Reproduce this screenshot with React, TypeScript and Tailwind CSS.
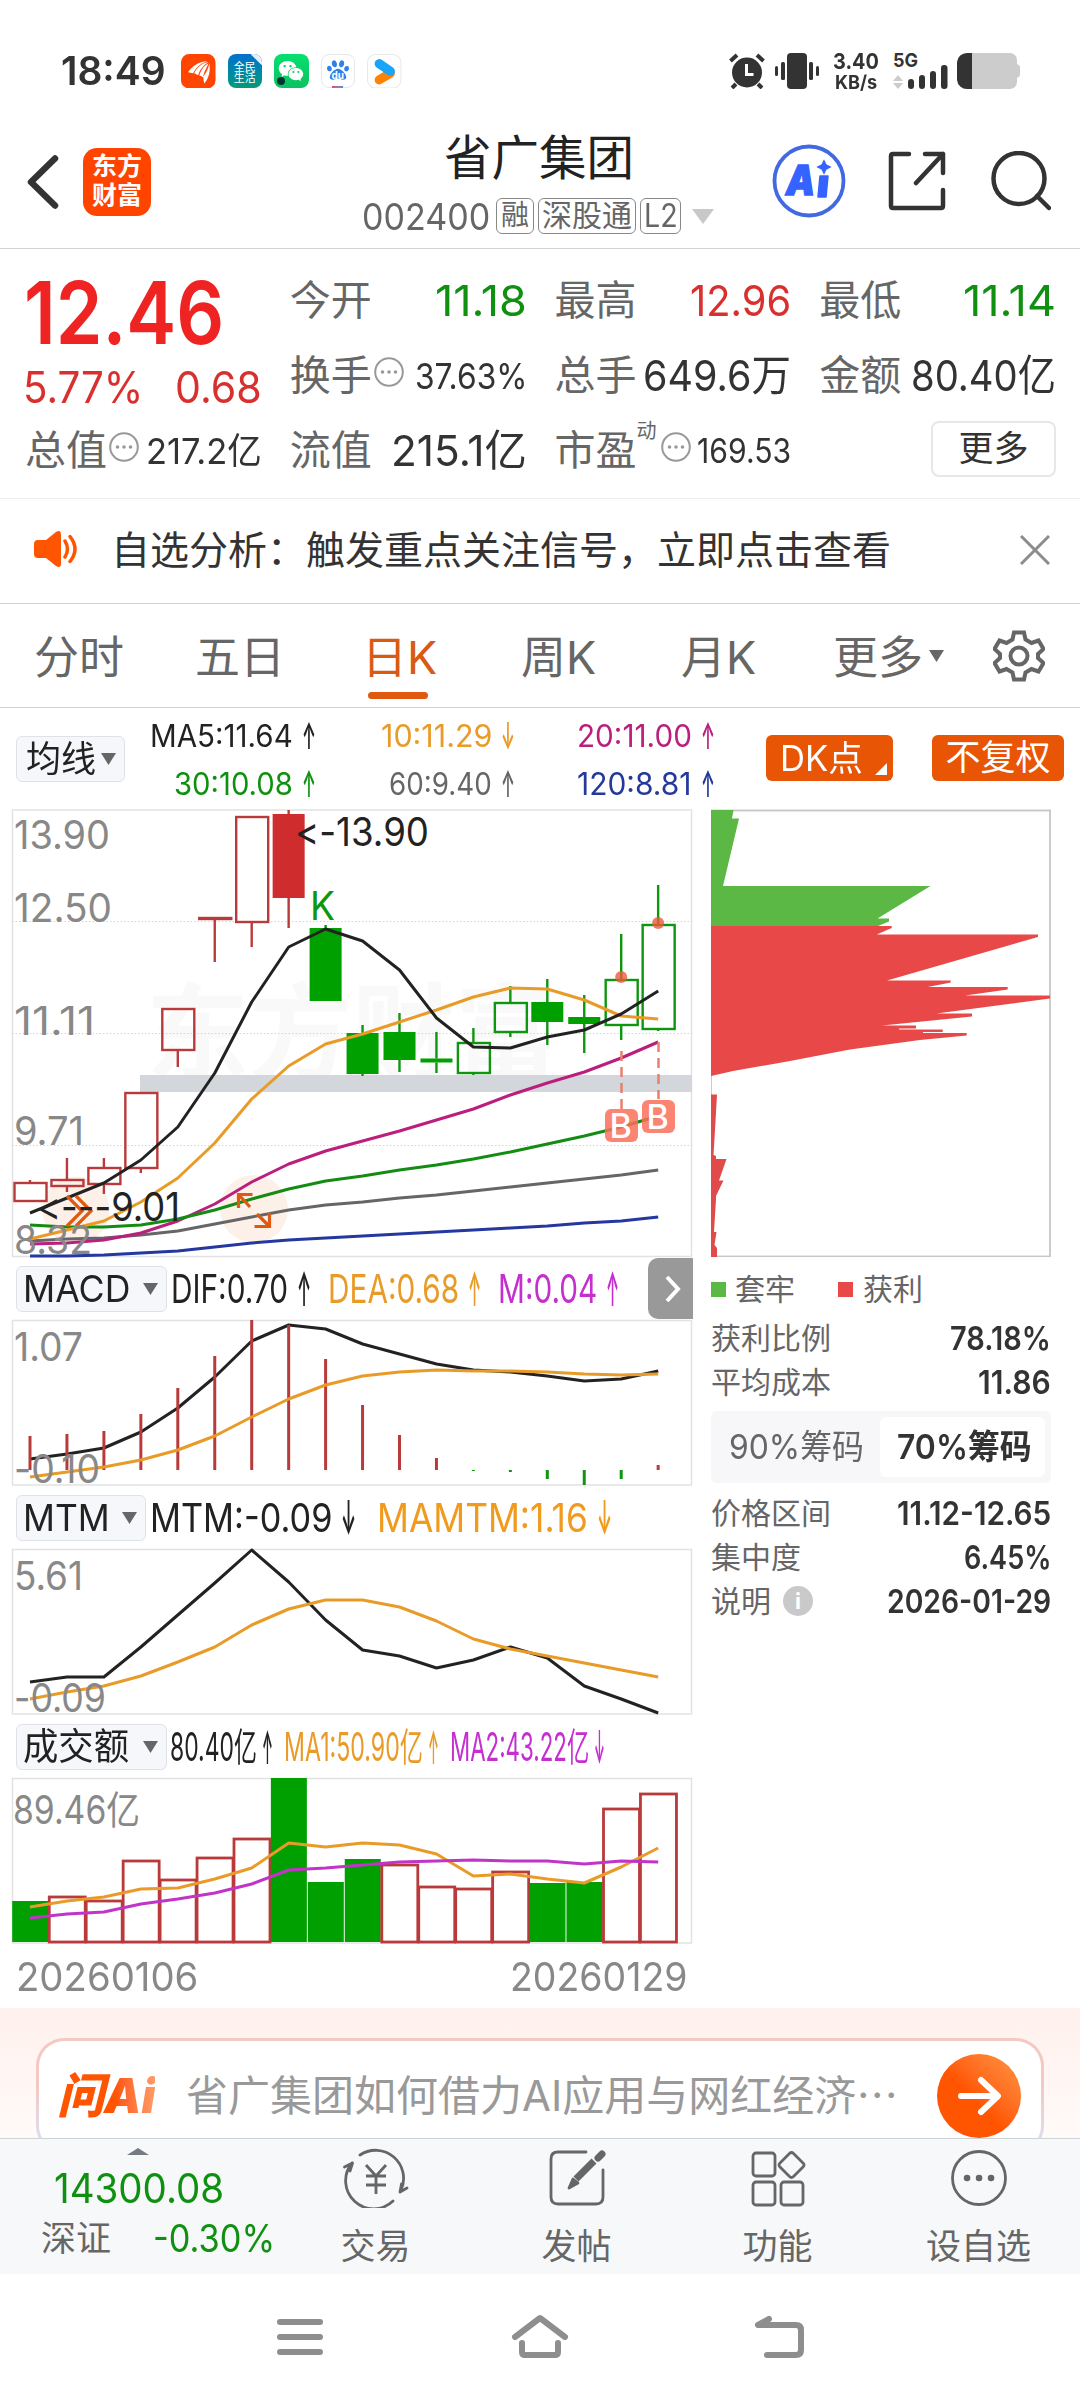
import { useLayoutEffect, useRef, type ReactNode } from "react";
import { AiFillWechat } from "react-icons/ai";
import { FaPaw } from "react-icons/fa";

// Squeezes or stretches one line of text to the width of its cell
function Fit({ w, className = "", children }: { w: number; className?: string; children: ReactNode }) {
  const ref = useRef<HTMLSpanElement>(null);

  useLayoutEffect(() => {
    const el = ref.current;
    if (el) el.style.transform = `scaleX(${w / el.offsetWidth})`;
  }, [w, children]);

  return (
    <span className={`block shrink-0 whitespace-nowrap leading-none ${className}`} style={{ width: w }}>
      <span ref={ref} className="inline-block origin-left">
        {children}
      </span>
    </span>
  );
}

function Down({ className = "" }: { className?: string }) {
  return (
    <svg viewBox="0 0 15 12" preserveAspectRatio="none" className={`shrink-0 ${className}`} fill="currentColor">
      <path d="M0 0h15L7.5 12z" />
    </svg>
  );
}

function Dots() {
  return (
    <svg viewBox="0 0 30 30" className="w-[30px] h-[30px] shrink-0 text-[#999]">
      <circle cx="15" cy="15" r="13.8" fill="none" stroke="currentColor" strokeWidth="2" />
      <circle cx="8.5" cy="15" r="1.8" fill="currentColor" />
      <circle cx="15" cy="15" r="1.8" fill="currentColor" />
      <circle cx="21.5" cy="15" r="1.8" fill="currentColor" />
    </svg>
  );
}

function StatusBar() {
  return (
    <div className="h-[124px] pt-[53px] pl-[61px] pr-[60px] flex items-start justify-between text-[#333]">
      <div className="flex items-center h-9">
        <Fit w={105} className="text-[40px] font-semibold">18:49</Fit>
        <div className="flex gap-3 ml-[15px]">
          <svg viewBox="0 0 34 34" className="w-[34.5px] h-[34.5px]">
            <rect width="34" height="34" rx="8" fill="#ff4500" />
            <path d="M7 18C11 12 17 8 26 7c-8 3-12 8-14 12zM13 19c3-6 8-10 14-11-6 4-9 9-10 13zM18 21c2-6 5-10 9-12-2 6-5 9-5 14z" fill="#fff" />
            <path d="M28 9c1 7 0 14-5 20-1-3-1-5-1-7 3-4 5-8 6-13z" fill="#fff" />
          </svg>
          <div className="w-[34.5px] h-[34.5px] rounded-lg bg-gradient-to-b from-[#0c6ed0] to-[#079a76] text-white text-[11px] leading-[11px] text-center pt-[8px] overflow-hidden relative">
            <div>全民</div>
            <div>生活</div>
            <div className="absolute -top-[7px] -right-[7px] w-[15px] h-[15px] rotate-45 bg-[#e8eef5]" />
          </div>
          <div className="w-[34.5px] h-[34.5px] rounded-lg bg-gradient-to-b from-[#05e070] to-[#0bc160] flex items-center justify-center relative">
            <AiFillWechat className="w-7 h-7 text-white" />
            <div className="absolute left-[3px] bottom-[3px] w-[8px] h-[8px] rounded-full bg-[#033]" />
          </div>
          <div className="w-[34.5px] h-[34.5px] rounded-lg border border-gray-200 relative flex justify-center">
            <FaPaw className="w-[22px] h-[26px] text-[#2f80e8] mt-[2px]" />
            <span className="absolute top-[15px] text-[10px] font-bold text-white leading-none">du</span>
            <div className="absolute -bottom-px w-[11px] h-[2px] bg-gradient-to-r from-[#e6455a] to-[#3b8be8]" />
          </div>
          <svg viewBox="0 0 34 34" className="w-[34.5px] h-[34.5px]">
            <rect x=".5" y=".5" width="33" height="33" rx="8" fill="#fff" stroke="#e8e8e8" />
            <path d="M12 25.5L23 19" stroke="#ff8208" strokeWidth="9" strokeLinecap="round" />
            <path d="M12 9.5L23 17" stroke="#18a4f8" strokeWidth="9" strokeLinecap="round" />
          </svg>
        </div>
      </div>

      <div className="flex items-start h-9">
        <svg viewBox="0 0 36 36" className="w-9 h-9">
          <circle cx="18" cy="19.5" r="15" fill="#333" />
          <path d="M1.5 8L8 2M34.5 8L28 2M7 31l-4 4M29 31l4 4" stroke="#333" strokeWidth="4" />
          <path d="M17.500 11v10.500h7" fill="none" stroke="#fff" strokeWidth="3" />
        </svg>
        <svg viewBox="0 0 44 36" className="w-11 h-9 ml-[10px]" fill="#333">
          <rect x="12" width="20" height="36" rx="4" />
          <rect x="6" y="9" width="4" height="18" rx="1.500" />
          <rect x="34" y="9" width="4" height="18" rx="1.500" />
          <rect y="13" width="3" height="10" rx="1.500" />
          <rect x="41" y="13" width="3" height="10" rx="1.500" />
        </svg>
        <div className="ml-[14px]">
          <Fit w={46} className="text-[22px] font-bold -mt-[3px]">3.40</Fit>
          <Fit w={42} className="text-[19px] font-bold mt-[1px] ml-[2px]">KB/s</Fit>
        </div>
        <svg viewBox="0 0 56 36" className="w-14 h-9 ml-[14px] overflow-visible" fill="#333">
          <text x="0" y="14" textLength="25" lengthAdjust="spacingAndGlyphs" className="text-[19px] font-bold">5G</text>
          <path d="M0 28l5-6 5 6zM0 30h10l-5 6z" fill="#ccc" />
          <rect x="15" y="26" width="6" height="10" rx="3" />
          <rect x="26" y="22" width="6" height="14" rx="3" />
          <rect x="37" y="18" width="6" height="18" rx="3" />
          <rect x="48" y="12" width="6.500" height="24" rx="3" />
        </svg>
        <svg viewBox="0 0 63 36" className="w-[63px] h-9 ml-[8px]">
          <path d="M15 0h38a7 7 0 0 1 7 7v4q3 1 3 3v8q0 2-3 3v4a7 7 0 0 1-7 7H15z" fill="#ccc" />
          <path d="M15 0v36H10A10 10 0 0 1 0 27V9A10 10 0 0 1 10 0z" fill="#333" />
        </svg>
      </div>
    </div>
  );
}

function Header() {
  return (
    <div className="h-[125px] border-b border-[#d3d3d3] flex text-[#333]">
      <svg viewBox="0 0 32 54" className="w-8 h-[54px] ml-[27px] mt-[31px]">
        <path d="M28 3.500L4 27l24 23.500" fill="none" stroke="#333" strokeWidth="6.500" strokeLinecap="round" strokeLinejoin="round" />
      </svg>
      <div className="w-[68px] h-[68px] ml-6 mt-6 rounded-[14px] bg-[#ff4400] text-white text-[25px] leading-[29px] font-bold text-center pt-[4px]">
        <div>东方</div>
        <div>财富</div>
      </div>

      <div className="w-[352px] ml-[211px] pt-[10px]">
        <div className="text-[47.5px] leading-[48px] text-[#222] pl-[82px] whitespace-nowrap">省广集团</div>
        <div className="flex items-center mt-[15px] h-[38px] text-[#666]">
          <Fit w={128} className="text-[37px]">002400</Fit>
          <div className="w-[38px] h-9 ml-[6px] rounded-md border border-[#888] text-[28px] leading-[33px] text-center">融</div>
          <div className="w-[98px] h-9 ml-1 rounded-md border border-[#888] text-[30px] leading-[33px] text-center">深股通</div>
          <div className="w-[41px] h-9 ml-1 rounded-md border border-[#888] flex items-center justify-center">
            <Fit w={34} className="text-[32px]">L2</Fit>
          </div>
          <Down className="w-[22px] h-[15px] ml-[11px] text-[#c8c8c8]" />
        </div>
      </div>

      <svg viewBox="0 0 74 74" className="w-[74px] h-[74px] ml-[58px] mt-5">
        <circle cx="37" cy="37" r="34.500" fill="none" stroke="#4169e1" strokeWidth="3.800" />
        <text x="14" y="51" textLength="29" lengthAdjust="spacingAndGlyphs" fill="#3563ff" stroke="#3563ff" strokeWidth="1.500" className="text-[41px] font-black italic">A</text>
        <path d="M48 32h8l-2 21h-8z" fill="#3563ff" stroke="#3563ff" strokeWidth="1.500" strokeLinejoin="round" />
        <path d="M52 17l2 4 4 2-4 2-2 4-2-4-4-2 4-2z" fill="#3563ff" stroke="#3563ff" strokeWidth="1.500" />
      </svg>
      <svg viewBox="0 0 58 60" className="w-[58px] h-[60px] ml-[42px] mt-[27px]" fill="none" stroke="#333" strokeWidth="4.500" strokeLinecap="round" strokeLinejoin="round">
        <path d="M21 3H5Q3 3 3 5v50q0 2 2 2h48q2 0 2-2V39" />
        <path d="M37 3h18v19M55 3L28 32" />
      </svg>
      <svg viewBox="0 0 60 60" className="w-[60px] h-[60px] ml-[45px] mt-[27px]" fill="none" stroke="#333" strokeWidth="4.500" strokeLinecap="round">
        <circle cx="28" cy="27.500" r="25.500" />
        <path d="M46 45l12 12" />
      </svg>
    </div>
  );
}

type CellProps = { label: string; value: string; w: number; tone?: string; size?: string; dots?: boolean; sup?: string };

function Cell({ label, value, w, tone = "text-[#333]", size = "text-[43px]", dots, sup }: CellProps) {
  return (
    <div className="h-[75px] flex items-center justify-between">
      <div className="flex items-center">
        <span className="text-[41px] leading-none text-[#666] whitespace-nowrap">{label}</span>
        {sup && <span className="text-[20px] leading-none text-[#666] mb-10 mr-[2px]">{sup}</span>}
        {dots && <div className="mb-2 ml-[2px]"><Dots /></div>}
      </div>
      <Fit w={w} className={`${size} ${tone}`}>{value}</Fit>
    </div>
  );
}

function Quote() {
  const red = "text-[#d8302f]";
  const green = "text-[#109010]";
  const small = "text-[36px]";
  return (
    <div className="h-[250px] border-b border-[#ececec] pl-[25px] pr-[24px] pt-[14px] grid grid-cols-4 gap-x-7 content-start">
      <div className="row-span-2 pt-[6px]">
        <Fit w={200} className="text-[87px] font-semibold text-[#f02323] -ml-[1px]">12.46</Fit>
        <div className={`flex justify-between mt-[9px] ${red}`}>
          <Fit w={120} className="text-[44px] -ml-[2px]">5.77%</Fit>
          <Fit w={87} className="text-[44px]">0.68</Fit>
        </div>
      </div>
      <Cell label="今开" value="11.18" w={92} tone={green} />
      <Cell label="最高" value="12.96" w={101} tone={red} />
      <Cell label="最低" value="11.14" w={93} tone={green} />
      <Cell label="换手" value="37.63%" w={112} size={small} dots />
      <Cell label="总手" value="649.6万" w={148} />
      <Cell label="金额" value="80.40亿" w={145} />
      <Cell label="总值" value="217.2亿" w={116} size={small} dots />
      <Cell label="流值" value="215.1亿" w={136} />
      <Cell label="市盈" value="169.53" w={94} size="text-[34px]" sup="动" dots />
      <div className="h-[75px] flex items-center justify-end">
        <div className="w-[125px] h-[56px] -mt-1 rounded-lg border-2 border-[#e6e7e8] text-[35px] leading-[50px] text-[#333] text-center">更多</div>
      </div>
    </div>
  );
}

function Notice() {
  return (
    <div className="h-[105px] border-b border-[#d3d3d3] flex items-center">
      <svg viewBox="0 0 44 36" className="w-11 h-9 ml-[34px] mb-1">
        <path d="M0 13q0-4 4-4h8L22 1q5-3 5 3v28q0 6-5 3l-10-8H4q-4 0-4-4z" fill="#ff5500" />
        <path d="M31 10q5 8 0 16M36 5.500q10 12.500 0 25" fill="none" stroke="#ff5500" strokeWidth="3.500" strokeLinecap="round" />
      </svg>
      <span className="ml-[33px] mb-[3px] text-[39px] leading-none text-[#333] whitespace-nowrap">自选分析：触发重点关注信号，立即点击查看</span>
      <svg viewBox="0 0 30 30" className="w-[30px] h-[30px] ml-auto mr-[30px] mb-[2px]" stroke="#8c8c8c" strokeWidth="3">
        <path d="M1 1l28 28M29 1L1 29" />
      </svg>
    </div>
  );
}

function Tabs() {
  const tab = "text-[45px] leading-none whitespace-nowrap mt-[4px]";
  return (
    <div className="h-[104px] border-b border-[#d3d3d3] flex items-center text-[#666] relative">
      <span className={`${tab} ml-[34px] w-[161px]`}>分时</span>
      <span className={`${tab} w-[167px]`}>五日</span>
      <span className={`${tab} w-[159px] text-[#d95a13]`}>日K</span>
      <span className={`${tab} w-[160px]`}>周K</span>
      <span className={`${tab} w-[152px]`}>月K</span>
      <span className={tab}>更多</span>
      <Down className="w-[15px] h-3 ml-[6px]" />
      <svg viewBox="0 0 52 52" className="w-[52px] h-[52px] ml-[49px]" fill="none" stroke="#666" strokeWidth="4">
        <path d="M21 2.500h10l1.500 7 6 3.500 7-2.500 5 8.500-5.500 5v4l5.500 5-5 8.500-7-2.500-6 3.500-1.500 7H21l-1.500-7-6-3.500-7 2.500-5-8.500L7 28v-4l-5.500-5 5-8.500 7 2.500 6-3.500z" />
        <circle cx="26" cy="26" r="8.500" />
      </svg>
      <div className="absolute left-[368px] bottom-2 w-[60px] h-[7px] rounded-full bg-[#df5a10]" />
    </div>
  );
}

function Arrow({ up = true, w = 14 }: { up?: boolean; w?: number }) {
  return <Fit w={w} className="ml-[9px] text-[1.2em] font-semibold">{up ? "↑" : "↓"}</Fit>;
}

function Ma({ text, w, up = true, tone }: { text: string; w: number; up?: boolean; tone: string }) {
  return (
    <div className={`flex items-center justify-end text-[31px] h-[48.5px] ${tone}`}>
      <Fit w={w}>{text}</Fit>
      <Arrow up={up} />
    </div>
  );
}

function MaBar() {
  return (
    <div className="h-[101px] flex items-start pl-4">
      <div className="w-[109px] h-[46px] mt-[28px] rounded-md border border-[#dfe2e6] bg-[#f6f7fa] flex items-center pl-[9px] text-[#222]">
        <Fit w={70} className="text-[36px]">均线</Fit>
        <Down className="w-[15px] h-3 ml-[5px] text-[#666]" />
      </div>
      <div className="mt-[3px] w-[191px]">
        <Ma text="MA5:11.64" w={143} tone="text-[#222]" />
        <Ma text="30:10.08" w={119} tone="text-[#109010]" />
      </div>
      <div className="mt-[3px] w-[199px]">
        <Ma text="10:11.29" w={111} up={false} tone="text-[#e99b28]" />
        <Ma text="60:9.40" w={103} tone="text-[#666]" />
      </div>
      <div className="mt-[3px] w-[200px]">
        <Ma text="20:11.00" w={115} tone="text-[#bb1f7d]" />
        <Ma text="120:8.81" w={115} tone="text-[#24399b]" />
      </div>
      <div className="w-[127px] h-[46px] ml-[51px] mt-[27px] rounded-md bg-[#e85504] text-white flex items-center pl-[14px] relative">
        <Fit w={83} className="text-[35px]">DK点</Fit>
        <svg viewBox="0 0 12 12" className="absolute right-[6px] bottom-[6px] w-3 h-3">
          <path d="M12 0v12H0z" fill="#fff" />
        </svg>
      </div>
      <div className="w-[132px] h-[46px] ml-[39px] mt-[27px] rounded-md bg-[#e85504] text-white text-[35px] leading-[44px] text-center">不复权</div>
    </div>
  );
}

const x = (i: number) => 30 + 36.95 * i;
const line = (ys: number[]) => ys.map((y, i) => `${x(i).toFixed(1)},${y}`).join(" ");

const RED = "#b93a3a";
const GREEN = "#0f960f";

// kind: r hollow red, R filled red, g hollow green, G filled green; then body top, body bottom, high, low
const candles: [string, number, number, number, number][] = [
  ["r", 1183, 1201, 1180, 1201],
  ["r", 1180, 1186, 1158, 1192],
  ["r", 1168, 1184, 1158, 1194],
  ["r", 1093, 1168, 1093, 1173],
  ["r", 1009, 1050, 1009, 1067],
  ["r", 918, 919, 918, 962],
  ["r", 817, 922, 817, 947],
  ["R", 814, 898, 810, 928],
  ["G", 928, 1001, 925, 1001],
  ["G", 1033, 1074, 1025, 1076],
  ["G", 1032, 1060, 1013, 1072],
  ["G", 1058.5, 1062.5, 1032, 1073],
  ["g", 1043, 1073, 1028, 1075],
  ["g", 1003, 1032, 986, 1037],
  ["G", 1002, 1022, 979, 1045],
  ["G", 1017, 1024, 995, 1053],
  ["g", 980, 1025, 934, 1040],
  ["g", 925, 1029, 885, 1031],
];

const ma5 = [1213, 1198, 1183, 1160, 1127, 1073, 1002, 947, 929, 941, 970, 1018, 1047, 1048, 1037, 1030, 1014, 991];
const ma10 = [1239, 1230, 1221, 1202, 1178, 1143, 1099, 1066, 1044, 1034, 1022, 1010, 997, 988, 989, 1000, 1016, 1019];
const ma20 = [1244, 1243, 1240, 1233, 1221, 1204, 1182, 1164, 1151, 1141, 1131, 1120, 1109, 1095, 1083, 1072, 1058, 1042];
const ma30 = [1225, 1227, 1227, 1225, 1219, 1210, 1199, 1189, 1181, 1176, 1170, 1165, 1159, 1152, 1144, 1136, 1127, 1116];
const ma60 = [1241, 1239, 1238, 1235, 1231, 1224, 1217, 1210, 1205, 1202, 1198, 1195, 1191, 1187, 1183, 1179, 1175, 1170];
const ma120 = [1256, 1256, 1255, 1253, 1251, 1247, 1243, 1240, 1238, 1236, 1234, 1232, 1230, 1228, 1226, 1223, 1221, 1217];

function Line({ ys, color }: { ys: number[]; color: string }) {
  return <polyline points={line(ys)} fill="none" stroke={color} strokeWidth="3" strokeLinejoin="round" />;
}

function Label({ y, w, children, lx = 14, fill = "#888" }: { y: number; w: number; children: string; lx?: number; fill?: string }) {
  return (
    <text x={lx} y={y} textLength={w} lengthAdjust="spacingAndGlyphs" fill={fill} className="text-[39px] [font-feature-settings:'calt'_0]">
      {children}
    </text>
  );
}

function KChart() {
  return (
    <svg viewBox="12 809 681 448" className="w-[681px] h-[448px] block overflow-visible">
      <text x="146" y="1072" textLength="412" lengthAdjust="spacingAndGlyphs" fill="#f9f9f9" className="text-[106px] font-bold">东方财富</text>
      <rect x="12.5" y="810" width="679" height="446.5" fill="none" stroke="#e2e2e2" strokeWidth="1.5" />
      <path d="M12 921.500H692M12 1033.500H692M12 1145.500H692" stroke="#d4d4d4" strokeDasharray="1.500 2" />
      <rect x="140" y="1075" width="552" height="17" fill="#d3d7dc" />

      <circle cx="76" cy="1210" r="33.5" fill="#fdf0e9" />
      <circle cx="254" cy="1209" r="34" fill="#fdf0e9" />

      {candles.map(([kind, top, bottom, high, low], i) => {
        const solid = kind === "R" || kind === "G";
        const fill = kind === "R" ? "#cf2d2d" : kind === "G" ? "#00a000" : "#fff";
        const stroke = kind === "r" || kind === "R" ? RED : GREEN;
        return (
          <g key={i} stroke={stroke} strokeWidth="2.4">
            <path d={`M${x(i)} ${high}V${top}M${x(i)} ${bottom}V${low}`} />
            {solid ? (
              <rect x={x(i) - 16} y={top} width="32" height={bottom - top} fill={fill} stroke="none" />
            ) : (
              <rect x={x(i) - 15.5} y={top} width="32" height={bottom - top} fill={i > 15 ? "#fff" : "none"} />
            )}
          </g>
        );
      })}

      <Line ys={ma120} color="#2438a0" />
      <Line ys={ma60} color="#666" />
      <Line ys={ma20} color="#bb1f7d" />
      <Line ys={ma30} color="#148c14" />
      <Line ys={ma10} color="#e99b28" />
      <Line ys={ma5} color="#222" />

      <g fill="none" stroke="#df5a10" strokeWidth="3.2">
        <path d="M67 1196l15 15-15 15M76 1196l15 15-15 15" />
        <path d="M250 1207l-11-12M238.500 1208v-13.500h14M257 1214l12 12M269.500 1213v13.500h-15" />
      </g>

      <path d="M621.500 1051v58M658.500 1042v57" stroke="#e6806f" strokeWidth="2.500" strokeDasharray="10 6" />
      <circle cx={x(16)} cy="977" r="6" fill="#ee5a3c" opacity=".8" />
      <circle cx={x(17)} cy="923" r="6" fill="#ee5a3c" opacity=".8" />
      <g fill="#fa6e5a" fillOpacity=".85">
        <rect x="605" y="1109" width="33" height="33" rx="6" />
        <rect x="642" y="1100" width="33" height="33" rx="6" />
      </g>
      <g fill="#fff" className="text-[34px] font-medium">
        <text x="609.500" y="1138">B</text>
        <text x="646.500" y="1129">B</text>
      </g>

      <Label y={849} w={96}>13.90</Label>
      <Label y={922} w={98}>12.50</Label>
      <Label y={1035} w={81}>11.11</Label>
      <Label y={1145} w={70}>9.71</Label>
      <Label y={1254} w={78}>8.32</Label>
      <Label y={846} w={134} lx={295} fill="#222">{"<-13.90"}</Label>
      <Label y={1221} w={143} lx={37} fill="#222">{"<---9.01"}</Label>
      <Label y={920} w={25} lx={310} fill={GREEN}>K</Label>
    </svg>
  );
}

function Pick({ label, w, box }: { label: string; w: number; box: string }) {
  return (
    <div className={`${box} h-[46px] ml-1 shrink-0 rounded-md border border-[#dfe2e6] bg-[#f6f7fa] flex items-center justify-between pl-[6px] pr-[8px] text-[#222]`}>
      <Fit w={w} className="text-[37px]">{label}</Fit>
      <Down className="w-[15px] h-3 text-[#666]" />
    </div>
  );
}

const macd = [1436, 1434, 1431, 1414, 1388, 1356, 1320, 1325, 1359, 1405, 1435, 1458, 1471, 1472, 1479, 1485, 1479, 1465];
const dif = [1459, 1454, 1448, 1432, 1408, 1377, 1341, 1325, 1329, 1344, 1354, 1364, 1370, 1372, 1376, 1381, 1379, 1371];
const dea = [1477, 1472, 1467, 1460, 1450, 1436, 1417, 1399, 1385, 1376, 1372, 1370, 1371, 1371, 1372, 1374, 1375, 1374];
const mtm = [1682, 1677, 1677, 1647, 1615, 1583, 1550, 1582, 1620, 1650, 1656, 1668, 1660, 1647, 1658, 1686, 1699, 1713];
const mamtm = [1699, 1692, 1686, 1676, 1662, 1647, 1625, 1609, 1600, 1600, 1607, 1621, 1639, 1649, 1656, 1663, 1670, 1677];
const volume: [string, number][] = [
  ["G", 1901], ["r", 1897], ["r", 1901], ["r", 1861], ["r", 1880], ["r", 1858], ["r", 1839], ["G", 1778], ["G", 1882],
  ["G", 1859], ["r", 1865], ["r", 1887], ["r", 1889], ["r", 1872], ["G", 1883], ["G", 1882], ["r", 1809], ["r", 1794],
];
const vol1 = [1907, 1901, 1897, 1889, 1888, 1879, 1868, 1843, 1847, 1843, 1845, 1854, 1876, 1874, 1879, 1883, 1867, 1848];
const vol2 = [1918, 1914, 1912, 1904, 1899, 1893, 1884, 1870, 1868, 1865, 1862, 1861, 1860, 1861, 1861, 1864, 1861, 1862];

function Charts() {
  return (
    <div className="w-[681px] ml-3">
      <KChart />

      {/* MACD */}
      <div className="h-[63px] flex items-center text-[40px] text-[#222] relative">
        <Pick label="MACD" w={107} box="w-[151px]" />
        <Fit w={117} className="ml-1">DIF:0.70</Fit>
        <Arrow />
        <div className="flex items-center ml-[17px] text-[#e99b28]">
          <Fit w={131}>DEA:0.68</Fit>
          <Arrow w={13} />
        </div>
        <div className="flex items-center ml-[17px] text-[#c52fcf]">
          <Fit w={99}>M:0.04</Fit>
          <Arrow w={13} />
        </div>
        <div className="absolute right-0 top-[1px] w-[45px] h-[61px] rounded-l-[10px] bg-[#999] flex items-center justify-center">
          <svg viewBox="0 0 16 28" className="w-4 h-7 ml-1" fill="none" stroke="#fff" strokeWidth="4">
            <path d="M2 2l11 12L2 26" />
          </svg>
        </div>
      </div>
      <svg viewBox="12 1320 681 166" className="w-[681px] h-[166px] block overflow-visible">
        <rect x="12.500" y="1320.500" width="679" height="164.500" fill="none" stroke="#e2e2e2" strokeWidth="1.500" />
        <Line ys={dif} color="#222" />
        {macd.map((y, i) => (
          <path key={i} d={`M${x(i)} 1470V${y}`} stroke={y < 1470 ? RED : GREEN} strokeWidth="3" />
        ))}
        <Line ys={dea} color="#e99b28" />
        <Label y={1361} w={69}>1.07</Label>
        <Label y={1483} w={86}>-0.10</Label>
      </svg>

      {/* MTM */}
      <div className="h-[63px] flex items-center text-[39px] text-[#222]">
        <Pick label="MTM" w={87} box="w-[130px]" />
        <Fit w={182} className="ml-1">MTM:-0.09</Fit>
        <Arrow up={false} w={15} />
        <div className="flex items-center ml-[21px] text-[#f09a1e]">
          <Fit w={211}>MAMTM:1.16</Fit>
          <Arrow up={false} w={15} />
        </div>
      </div>
      <svg viewBox="12 1549 681 166" className="w-[681px] h-[166px] block overflow-visible">
        <rect x="12.500" y="1549.500" width="679" height="164.500" fill="none" stroke="#e2e2e2" strokeWidth="1.500" />
        <Line ys={mtm} color="#222" />
        <Line ys={mamtm} color="#e99b28" />
        <Label y={1590} w={69}>5.61</Label>
        <Label y={1712} w={92}>-0.09</Label>
      </svg>

      {/* Turnover */}
      <div className="h-[63px] flex items-center text-[39px] text-[#222]">
        <Pick label="成交额" w={106} box="w-[151px]" />
        <Fit w={87} className="ml-[3px]">80.40亿</Fit>
        <Fit w={11} className="ml-[5px] text-[46px] font-semibold">↑</Fit>
        <div className="flex items-center ml-[11px] text-[#e99b28]">
          <Fit w={139}>MA1:50.90亿</Fit>
          <Fit w={11} className="ml-[5px] text-[46px] font-semibold">↑</Fit>
        </div>
        <div className="flex items-center ml-[11px] text-[#c52fcf]">
          <Fit w={139}>MA2:43.22亿</Fit>
          <Fit w={11} className="ml-[5px] text-[46px] font-semibold">↓</Fit>
        </div>
      </div>
      <svg viewBox="12 1778 681 166" className="w-[681px] h-[166px] block overflow-visible">
        <rect x="12.500" y="1778.500" width="679" height="164.500" fill="none" stroke="#e2e2e2" strokeWidth="1.500" />
        {volume.map(([kind, y], i) =>
          kind === "G" ? (
            <rect key={i} x={x(i) - 17.8} y={y} width="36" height={1942 - y} fill="#00a000" />
          ) : (
            <rect key={i} x={x(i) - 17.7} y={y} width="36" height={1942 - y} fill="none" stroke={RED} strokeWidth="2.800" />
          )
        )}
        <Line ys={vol1} color="#e99b28" />
        <Line ys={vol2} color="#c035c8" />
        <Label y={1824} w={127} lx={13}>89.46亿</Label>
      </svg>
      <div className="flex justify-between pl-[4px] pr-[5px] pt-[13px] text-[40px] text-[#888]">
        <Fit w={182}>20260106</Fit>
        <Fit w={178}>20260129</Fit>
      </div>
    </div>
  );
}

function Stat({ label, value, w, info }: { label: string; value: string; w: number; info?: boolean }) {
  return (
    <div className="h-11 flex items-center">
      <span className="text-[30px] leading-none text-[#666] whitespace-nowrap">{label}</span>
      {info && (
        <div className="w-[30px] h-[30px] ml-3 rounded-full bg-[#c9c9c9] text-white text-[22px] leading-[30px] font-bold text-center">i</div>
      )}
      <Fit w={w} className="ml-auto text-[33px] font-semibold text-[#333]">{value}</Fit>
    </div>
  );
}

function Chips() {
  return (
    <div className="w-[340px] ml-[18px]">
      <svg viewBox="711 809 340 448" className="w-[340px] h-[448px] block">
        <rect x="711" y="810.500" width="339" height="446" fill="none" stroke="#c6c6c6" strokeWidth="1.800" />
        <path d="M711 810H733.500L732 818.500H739L723 886H930.500L877.500 918.500H889V921.500L878 926H711z" fill="#5bb845" />
        <path
          d="M711 926H891.700V928L876.700 934.500H1038V937L887 980.500H950.700V982.500L927.700 987H1007.700V989.500L965 995.500H1050V998.500L936.500 1013.500H972V1016.500L882 1025.500H916V1028.500H899V1029.500H942.700V1032H923V1033H966.700V1035.500L920 1040 850 1049.500 790 1061 733 1071 711 1076z"
          fill="#e84848"
        />
        <path
          d="M711 1094.500H717L715 1130 713.500 1155 716 1156V1159H726.500L719 1180.500H723.500L716 1196V1199L714 1232H716.500L714.500 1245 717 1248V1257H711z"
          fill="#e04a4a"
        />
      </svg>

      <div className="h-[64px] flex items-center text-[30px] leading-none text-[#666]">
        <div className="w-[15px] h-[15px] bg-[#5bb845]" />
        <span className="ml-[9px] w-[103px]">套牢</span>
        <div className="w-[15px] h-[15px] bg-[#e84848]" />
        <span className="ml-[10px]">获利</span>
      </div>
      <div className="mt-[-5px]">
        <Stat label="获利比例" value="78.18%" w={101} />
        <Stat label="平均成本" value="11.86" w={73} />
      </div>
      <div className="h-[72px] mt-[7px] p-[6px] rounded-md bg-[#f7f7fa] flex">
        <div className="w-[163px] flex items-center justify-center">
          <Fit w={135} className="text-[34px] text-[#666] -ml-1">90%筹码</Fit>
        </div>
        <div className="flex-1 rounded-md bg-white flex items-center justify-center">
          <Fit w={135} className="text-[34px] font-semibold text-[#333] ml-1">70%筹码</Fit>
        </div>
      </div>
      <div className="mt-2">
        <Stat label="价格区间" value="11.12-12.65" w={154} />
        <Stat label="集中度" value="6.45%" w={87} />
        <Stat label="说明" value="2026-01-29" w={164} info />
      </div>
    </div>
  );
}

function AskAi() {
  return (
    <div className="h-[130px] px-[36px] pt-[30px] overflow-hidden bg-gradient-to-b from-[#fff1ed] to-[#fffaf8]">
      <div className="h-[116px] rounded-[28px] p-[3px] bg-gradient-to-b from-[#f3c9c1] from-40% to-[#dcdcec] to-85%">
        <div className="h-full rounded-[25px] bg-white flex items-center pl-[18px] pr-[20px]">
          <Fit w={98} className="text-[48px] leading-[56px] font-black italic">
            <span className="bg-gradient-to-r from-[#ff5500] from-60% to-[#ff9a66] bg-clip-text text-transparent">问Ai</span>
          </Fit>
          <span className="ml-[31px] w-[714px] text-[42px] leading-none text-[#999] whitespace-nowrap">省广集团如何借力AI应用与网红经济⋯</span>
          <div className="w-[84px] h-[84px] ml-auto rounded-full bg-gradient-to-tr from-[#ff5500] from-45% to-[#ff9640] flex items-center justify-center shrink-0">
            <svg viewBox="0 0 44 40" className="w-11 h-10" fill="none" stroke="#fff" strokeWidth="6" strokeLinecap="round" strokeLinejoin="round">
              <path d="M4 20h36M24 4l17 16-17 16" />
            </svg>
          </div>
        </div>
      </div>
    </div>
  );
}

function Action({ label, children }: { label: string; children: ReactNode }) {
  return (
    <div className="w-[201px] flex flex-col items-center text-[#666]">
      <svg viewBox="0 0 66 60" className="w-[66px] h-[60px] mt-[9px]" fill="none" stroke="#666" strokeWidth="2.800" strokeLinecap="round" strokeLinejoin="round">
        {children}
      </svg>
      <span className="text-[35px] leading-none mt-[21px]">{label}</span>
    </div>
  );
}

function BottomBar() {
  return (
    <div className="h-[136px] bg-[#f6f8fa] border-t border-[#cfd2d6] flex">
      <div className="w-[275px] flex flex-col text-[#109010]">
        <svg viewBox="0 0 22 7" className="w-[22px] h-[7px] ml-[127px] mt-[9px]">
          <path d="M0 7L11 0l11 7z" fill="#777a80" />
        </svg>
        <Fit w={170} className="text-[41px] ml-[54px] mt-[13px]">14300.08</Fit>
        <div className="flex items-center mt-[10px]">
          <span className="text-[35px] leading-none text-[#666] ml-[41px] w-[114px]">深证</span>
          <Fit w={122} className="text-[38px]">-0.30%</Fit>
        </div>
      </div>
      <Action label="交易">
        <path d="M17 7A28 28 0 0 1 58 42M50 53A28 28 0 0 1 9 15M1.500 19l8-4-2.500 8M64 40l-7 4 1.500-8" />
        <path d="M23 17l10 11 10-11M33 28v18M23 28h20M23 37h20" strokeLinecap="butt" />
      </Action>
      <Action label="发帖">
        <path d="M42 4H14Q7 4 7 11v38q0 7 7 7h38q7 0 7-7V22" />
        <path d="M54 10l4-4" strokeWidth="7" />
        <path d="M50 13L32 31" strokeWidth="7" strokeLinecap="butt" />
        <path d="M29 31l5 4-9 5z" fill="#666" />
      </Action>
      <Action label="功能">
        <rect x="8" y="5" width="22" height="23" rx="3" />
        <rect x="8" y="34" width="22" height="23" rx="3" />
        <rect x="36" y="34" width="22" height="23" rx="3" />
        <path d="M44.500 5.500q2-2 4 0L58 15q2 2 0 4l-9.500 9.500q-2 2-4 0L35 19q-2-2 0-4z" />
      </Action>
      <Action label="设自选">
        <circle cx="33" cy="30" r="26.500" />
        <path d="M21 30h.1M33 30h.1M45 30h.1" strokeWidth="6.500" />
      </Action>
    </div>
  );
}

function NavBar() {
  return (
    <div className="h-[126px] flex items-start pt-[40px]">
      <svg viewBox="0 0 48 46" className="w-12 h-[46px] ml-[276px]" stroke="#8e8e8e" strokeWidth="6" strokeLinecap="round">
        <path d="M4 8h40M4 23h40M4 38h40" />
      </svg>
      <svg viewBox="0 0 58 46" className="w-[58px] h-[46px] ml-[187px]" fill="none" stroke="#8e8e8e" strokeWidth="6" strokeLinecap="round" strokeLinejoin="round">
        <path d="M4 23L29 4l25 19M11 29v9q0 3 3 3h30q3 0 3-3v-9" />
      </svg>
      <svg viewBox="0 0 52 46" className="w-[52px] h-[46px] ml-[185px]" fill="none" stroke="#8e8e8e" strokeWidth="6" strokeLinecap="round" strokeLinejoin="round">
        <path d="M15 5L4 11h38q5 0 5 5v20q0 5-5 5H13" />
      </svg>
    </div>
  );
}

export default function App() {
  return (
    <div className="w-[1080px] h-[2400px] overflow-hidden bg-white font-[Inter,'Noto_Sans_CJK_SC',sans-serif]">
      <StatusBar />
      <Header />
      <Quote />
      <Notice />
      <Tabs />
      <MaBar />
      <div className="h-[1199px] flex items-start">
        <Charts />
        <Chips />
      </div>
      <AskAi />
      <BottomBar />
      <NavBar />
    </div>
  );
}
